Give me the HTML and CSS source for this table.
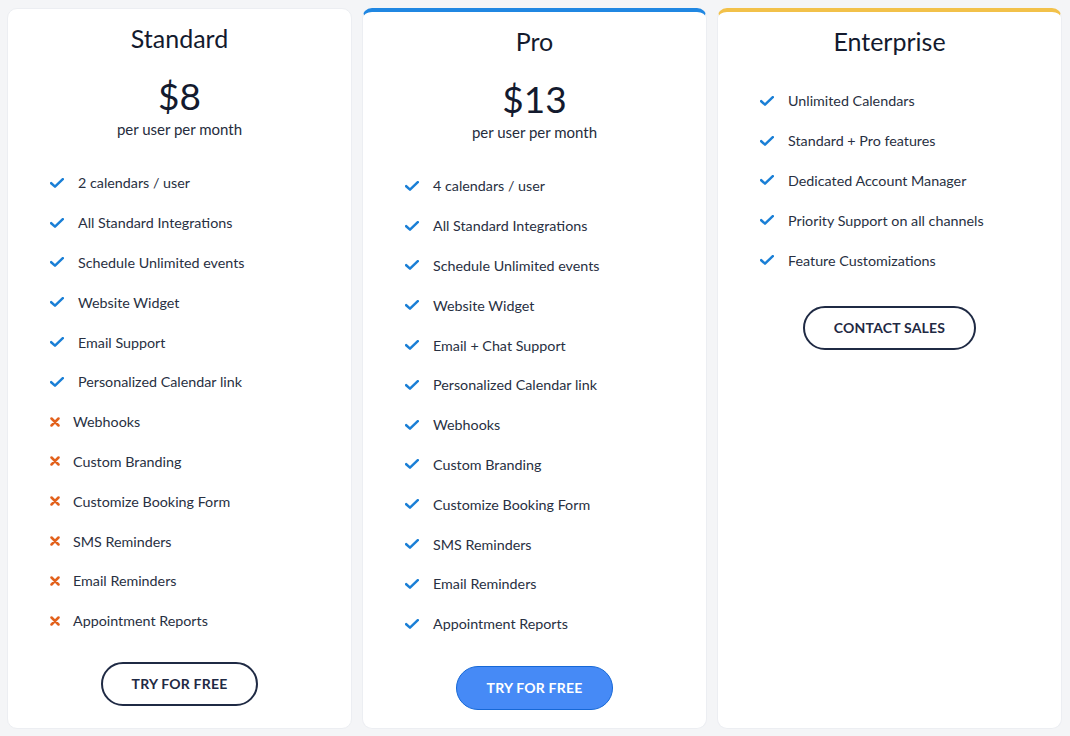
FILE: index.html
```html
<!DOCTYPE html>
<html lang="en">
<head>
<meta charset="utf-8">
<title>Pricing</title>
<link rel="stylesheet" href="styles.css">
</head>
<body>
<svg width="0" height="0" class="defs">
  <defs>
    <symbol id="chk" viewBox="0 0 14 10"><path d="M1.2 5.2 L5 8.6 L12.8 1.2" fill="none" stroke="currentColor" stroke-width="2.5" stroke-linecap="round" stroke-linejoin="round"/></symbol>
    <symbol id="crs" viewBox="0 0 10 10"><path d="M1.5 1.5 L8.5 8.5 M8.5 1.5 L1.5 8.5" fill="none" stroke="currentColor" stroke-width="2.5" stroke-linecap="round"/></symbol>
  </defs>
</svg>
<main class="plans">
  <section class="card">
    <h2 class="title">Standard</h2>
    <div class="price">$8</div>
    <div class="per">per user per month</div>
    <ul class="features">
      <li class="yes"><svg class="ic"><use href="#chk"/></svg><span>2 calendars / user</span></li>
      <li class="yes"><svg class="ic"><use href="#chk"/></svg><span>All Standard Integrations</span></li>
      <li class="yes"><svg class="ic"><use href="#chk"/></svg><span>Schedule Unlimited events</span></li>
      <li class="yes"><svg class="ic"><use href="#chk"/></svg><span>Website Widget</span></li>
      <li class="yes"><svg class="ic"><use href="#chk"/></svg><span>Email Support</span></li>
      <li class="yes"><svg class="ic"><use href="#chk"/></svg><span>Personalized Calendar link</span></li>
      <li class="no"><svg class="ic"><use href="#crs"/></svg><span>Webhooks</span></li>
      <li class="no"><svg class="ic"><use href="#crs"/></svg><span>Custom Branding</span></li>
      <li class="no"><svg class="ic"><use href="#crs"/></svg><span>Customize Booking Form</span></li>
      <li class="no"><svg class="ic"><use href="#crs"/></svg><span>SMS Reminders</span></li>
      <li class="no"><svg class="ic"><use href="#crs"/></svg><span>Email Reminders</span></li>
      <li class="no"><svg class="ic"><use href="#crs"/></svg><span>Appointment Reports</span></li>
    </ul>
    <a class="btn btn-outline btn-std" href="#">TRY FOR FREE</a>
  </section>
  <section class="card card-pro">
    <h2 class="title">Pro</h2>
    <div class="price">$13</div>
    <div class="per">per user per month</div>
    <ul class="features">
      <li class="yes"><svg class="ic"><use href="#chk"/></svg><span>4 calendars / user</span></li>
      <li class="yes"><svg class="ic"><use href="#chk"/></svg><span>All Standard Integrations</span></li>
      <li class="yes"><svg class="ic"><use href="#chk"/></svg><span>Schedule Unlimited events</span></li>
      <li class="yes"><svg class="ic"><use href="#chk"/></svg><span>Website Widget</span></li>
      <li class="yes"><svg class="ic"><use href="#chk"/></svg><span>Email + Chat Support</span></li>
      <li class="yes"><svg class="ic"><use href="#chk"/></svg><span>Personalized Calendar link</span></li>
      <li class="yes"><svg class="ic"><use href="#chk"/></svg><span>Webhooks</span></li>
      <li class="yes"><svg class="ic"><use href="#chk"/></svg><span>Custom Branding</span></li>
      <li class="yes"><svg class="ic"><use href="#chk"/></svg><span>Customize Booking Form</span></li>
      <li class="yes"><svg class="ic"><use href="#chk"/></svg><span>SMS Reminders</span></li>
      <li class="yes"><svg class="ic"><use href="#chk"/></svg><span>Email Reminders</span></li>
      <li class="yes"><svg class="ic"><use href="#chk"/></svg><span>Appointment Reports</span></li>
    </ul>
    <a class="btn btn-primary" href="#">TRY FOR FREE</a>
  </section>
  <section class="card card-ent">
    <h2 class="title">Enterprise</h2>
    <ul class="features features-ent">
      <li class="yes"><svg class="ic"><use href="#chk"/></svg><span>Unlimited Calendars</span></li>
      <li class="yes"><svg class="ic"><use href="#chk"/></svg><span>Standard + Pro features</span></li>
      <li class="yes"><svg class="ic"><use href="#chk"/></svg><span>Dedicated Account Manager</span></li>
      <li class="yes"><svg class="ic"><use href="#chk"/></svg><span>Priority Support on all channels</span></li>
      <li class="yes"><svg class="ic"><use href="#chk"/></svg><span>Feature Customizations</span></li>
    </ul>
    <a class="btn btn-outline btn-ent" href="#">CONTACT SALES</a>
  </section>
</main>
</body>
</html>
```
FILE: styles.css
```css
* { box-sizing: border-box; }
html, body { margin: 0; }
body {
  background: #f4f5f7;
  font-family: Lato, "Noto Sans", sans-serif;
  color: #1b2336;
}
.defs { position: absolute; }
.plans {
  display: grid;
  grid-template-columns: repeat(3, 345px);
  gap: 10px;
  padding: 8px 8px 8px 7px;
}
.card {
  background: #fff;
  border: 1px solid #eceef2;
  border-radius: 10px;
  display: flex;
  flex-direction: column;
  align-items: center;
  padding: 14px 0 18px;
  min-height: 720px;
}
.card-pro { border-top: 4px solid #2087e2; }
.card-ent { border-top: 4px solid #f2c14a; }
.title {
  margin: 0;
  font-size: 25px;
  line-height: 30px;
  font-weight: 400;
  color: #131a2e;
}
.price {
  margin-top: 23px;
  font-size: 37px;
  line-height: 40px;
  color: #131a2e;
}
.per {
  margin-top: 3px;
  font-size: 15px;
  line-height: 20px;
  color: #252c3c;
}
.features {
  list-style: none;
  margin: 24px 0 0;
  padding: 0 0 0 42px;
  align-self: stretch;
}
.features li {
  display: flex;
  align-items: center;
  height: 39.8px;
  font-size: 14.3px;
  color: #283042;
}
.ic { flex: none; }
.yes .ic { width: 14px; height: 10px; margin-right: 14px; color: #1a7fd6; }
.no .ic { width: 10px; height: 10px; margin: 0 13px 0 0; color: #e2611c; }
.features-ent { margin-top: 25px; }
.btn {
  display: inline-flex;
  align-items: center;
  justify-content: center;
  height: 44px;
  padding: 0 29px;
  border-radius: 22px;
  font-size: 14px;
  font-weight: 700;
  letter-spacing: 0.2px;
  text-decoration: none;
  margin-top: 22px;
}
.btn-outline {
  border: 2px solid #1f2a44;
  color: #1f2a44;
  background: #fff;
}
.btn-std { margin-top: 21px; }
.btn-primary {
  border: 1px solid #1668d6;
  background: #468af6;
  color: #fff;
  padding: 0 30px;
}
.btn-ent { margin-top: 26px; }
```
